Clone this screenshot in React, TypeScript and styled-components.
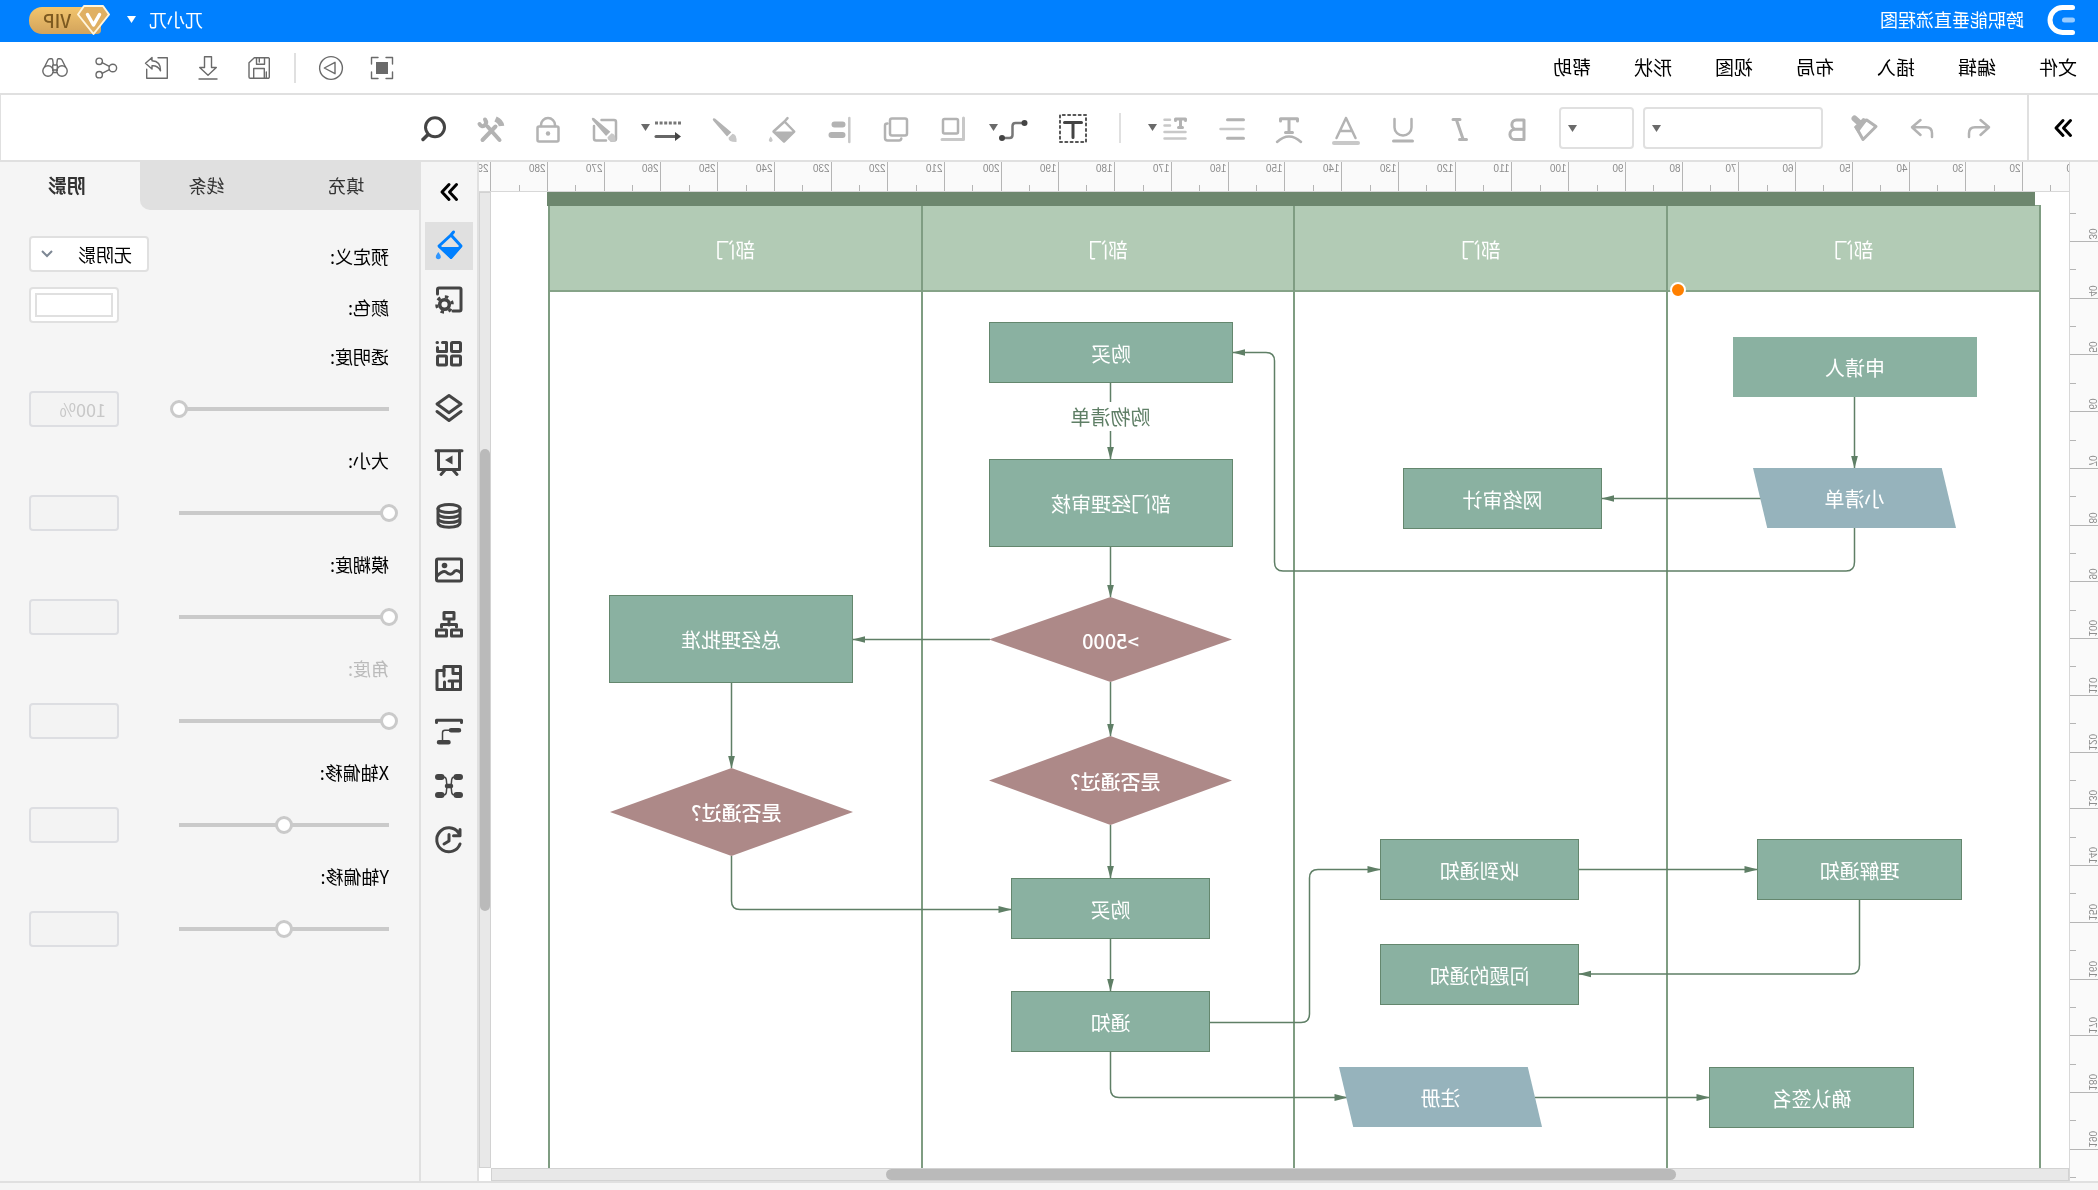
import React from "react";
import styled, { createGlobalStyle, css } from "styled-components";

const GlobalStyle = createGlobalStyle`
  *, *::before, *::after { box-sizing: border-box; }
  body { margin: 0; background: #fff; overflow: hidden; }
  body, button, input, select { font-family: "Noto Sans CJK SC", "Liberation Sans", sans-serif; }
  button { border: 0; padding: 0; background: none; color: inherit; cursor: pointer; }
  svg { display: block; overflow: visible; }
`;

const LINE = "#e0e0e0";
const EDGE = "#5f7f66";

/* The whole editor is rendered flipped, right to left. */
const Editor = styled.div`
  display: flex;
  flex-direction: column;
  height: 100vh;
  color: #000;
  transform: scaleX(-1);
`;

/* ---------- title bar ---------- */

const TitleBar = styled.header`
  display: flex;
  align-items: center;
  justify-content: space-between;
  height: 42px;
  flex: none;
  padding: 0 29px 2px 23px;
  background: #0080ff;
  color: #fff;
`;

const Brand = styled.div`
  display: flex;
  align-items: center;
  gap: 23px;
`;

const DocTitle = styled.h1`
  margin: 0;
  padding-bottom: 2px;
  font-size: 18px;
  font-weight: 400;
  line-height: 24px;
`;

const Account = styled.div`
  display: flex;
  align-items: center;
  gap: 17px;
`;

const UserButton = styled.button`
  display: flex;
  align-items: center;
  gap: 13px;
  padding-bottom: 2px;
  font-size: 18px;
  line-height: 24px;
`;

const VipBadge = styled.button`
  display: flex;
  align-items: center;
  height: 30px;
  color: #7d5a20;
`;

const VipPill = styled.span`
  width: 72px;
  height: 27px;
  margin-left: -24px;
  padding-left: 30px;
  border-radius: 4px 13px 13px 4px;
  background: linear-gradient(#f3c56c, #d2a35c);
  font-size: 18px;
  font-weight: 500;
  line-height: 26px;
  text-align: left;
`;

const Gem = styled.svg`
  position: relative;
  z-index: 1;
  flex: none;
`;

/* ---------- menu bar ---------- */

const MenuBar = styled.div`
  display: flex;
  align-items: center;
  justify-content: space-between;
  height: 53px;
  flex: none;
  padding: 0 43px 0 21px;
  border-bottom: 2px solid ${LINE};
`;

const Menus = styled.nav`
  display: flex;
  gap: 43px;
  padding-bottom: 2px;
`;

const MenuButton = styled.button`
  font-size: 19px;
  line-height: 28px;
`;

const QuickActions = styled.div`
  display: flex;
  align-items: center;
  gap: 27px;
`;

const QuickButton = styled.button`
  width: 24px;
  height: 24px;
  color: #6a6a6a;
`;

const Rule = styled.span<{ $margin?: string }>`
  width: 2px;
  height: 30px;
  margin: ${(p) => p.$margin ?? "0"};
  background: ${LINE};
`;

/* ---------- tool bar ---------- */

const ToolBar = styled.div`
  display: flex;
  height: 67px;
  flex: none;
  border-right: 1px solid ${LINE};
  border-bottom: 2px solid ${LINE};
`;

const ExpandButton = styled.button`
  display: grid;
  place-items: center;
  width: 71px;
  border-right: 2px solid ${LINE};
`;

const Tools = styled.div`
  display: flex;
  align-items: center;
  gap: 29px;
  padding-left: 34px;
`;

const Pickers = styled.div`
  display: flex;
  gap: 9px;
  margin: 0 -1px;
`;

const Picker = styled.div<{ $width: number }>`
  position: relative;
  width: ${(p) => p.$width}px;

  svg {
    position: absolute;
    top: 18px;
    right: 9px;
    pointer-events: none;
  }
`;

const PickerSelect = styled.select`
  width: 100%;
  height: 42px;
  border: 2px solid ${LINE};
  border-radius: 4px;
  background: #fff;
  appearance: none;
`;

const ToolButton = styled.button<{ $dark?: boolean; $menu?: boolean }>`
  display: flex;
  align-items: center;
  justify-content: space-between;
  width: ${(p) => (p.$menu ? 41 : 28)}px;
  height: 32px;
  color: ${(p) => (p.$dark ? "#444" : "#b3b3b3")};
  ${(p) =>
    p.$menu &&
    css`
      margin-right: -7px;
    `}
`;

/* ---------- work area ---------- */

const Main = styled.main`
  display: flex;
  flex: 1;
  min-height: 0;
`;

const Workspace = styled.section`
  display: grid;
  flex: 1;
  min-width: 0;
  grid-template-columns: 29px 1fr 12px;
  grid-template-rows: 30px 1fr 13px;
`;

const TopRuler = styled.div`
  grid-column: 2 / 4;
  grid-row: 1;
  overflow: hidden;
  border-bottom: 1px solid #d8d8d8;
  background: #fafafa;
`;

const SideRuler = styled.div`
  grid-column: 1;
  grid-row: 1 / 4;
  overflow: hidden;
  border-right: 1px solid #d8d8d8;
  background: #fafafa;
`;

const RulerText = styled.text`
  fill: #8c8c8c;
  font-family: "Liberation Sans", sans-serif;
  font-size: 10px;
`;

const Scroll = styled.div<{ $vertical?: boolean }>`
  grid-column: ${(p) => (p.$vertical ? 3 : 2)};
  grid-row: ${(p) => (p.$vertical ? 2 : 3)};
  border: 1px solid #d2d2d2;
  background: #e8e8e8;
`;

const Thumb = styled.div<{ $vertical?: boolean }>`
  border-radius: 6px;
  background: #bababa;
  ${(p) =>
    p.$vertical
      ? css`
          height: 462px;
          margin-top: 256px;
        `
      : css`
          width: 790px;
          height: 100%;
          margin-left: 392px;
        `}
`;

const Canvas = styled.div`
  position: relative;
  grid-column: 2;
  grid-row: 2;
  overflow: hidden;
  background: #fff;
`;

const PoolTitle = styled.div`
  position: absolute;
  left: 34px;
  top: 0;
  width: 1488px;
  height: 14px;
  background: #6d876e;
`;

const Pool = styled.div`
  position: absolute;
  left: 28px;
  top: 13px;
  bottom: 0;
  display: flex;
  width: 1493px;
  border-left: 2px solid #7f9d82;
`;

const Lane = styled.div`
  flex: 1;
  border-right: 2px solid #7f9d82;
`;

const LaneHead = styled.div`
  display: flex;
  align-items: center;
  justify-content: center;
  height: 87px;
  padding-top: 2px;
  border: solid #86a388;
  border-width: 1px 0 2px;
  background: #b2cbb5;
  color: #fff;
  font-size: 20px;
`;

const Edges = styled.svg`
  position: absolute;
  inset: 0;
  width: 100%;
  height: 100%;
  fill: none;
  stroke: ${EDGE};
  stroke-width: 1.5px;
`;

const EdgeLabel = styled.span`
  position: absolute;
  left: 900px;
  top: 211px;
  width: 117px;
  color: ${EDGE};
  font-size: 20px;
  line-height: 28px;
  text-align: center;
`;

type Kind = "box" | "plain" | "slant" | "diamond";

const kinds = {
  box: css`
    background: #8ab1a1;
    border: 1px solid #64876e;
  `,
  plain: css`
    background: #8ab1a1;
  `,
  slant: css`
    background: #96b3bc;
    clip-path: polygon(7% 0, 100% 0, 93% 100%, 0 100%);
  `,
  diamond: css`
    background: #ad8988;
    clip-path: polygon(50% 0, 100% 50%, 50% 100%, 0 50%);
    font-weight: 500;
  `,
};

const Node = styled.div<{ $kind: Kind; $x: number; $y: number; $w: number; $h: number }>`
  position: absolute;
  left: ${(p) => p.$x}px;
  top: ${(p) => p.$y}px;
  display: flex;
  align-items: center;
  justify-content: center;
  width: ${(p) => p.$w}px;
  height: ${(p) => p.$h}px;
  padding-top: 2px;
  color: #fff;
  font-size: 20px;
  line-height: 28px;
  ${(p) => kinds[p.$kind]}
`;

const Handle = styled.span`
  position: absolute;
  left: 383px;
  top: 90px;
  width: 16px;
  height: 16px;
  border: 2px solid #fff;
  border-radius: 50%;
  background: #ff8000;
`;

/* ---------- side strip and panel ---------- */

const Strip = styled.nav`
  display: flex;
  flex: none;
  flex-direction: column;
  align-items: center;
  gap: 6px;
  width: 60px;
  border: solid ${LINE};
  border-width: 0 2px;
  background: #f5f5f5;
`;

const CollapseButton = styled.button`
  display: grid;
  place-items: center;
  width: 48px;
  height: 54px;
  padding-top: 6px;
`;

const StripButton = styled.button<{ $active?: boolean }>`
  display: grid;
  place-items: center;
  width: 48px;
  height: 48px;
  background: ${(p) => (p.$active ? LINE : "none")};
  color: ${(p) => (p.$active ? "#0080ff" : "#444")};
`;

const Panel = styled.aside`
  flex: none;
  width: 419px;
  background: #f5f5f5;
`;

const Tabs = styled.div`
  display: flex;
  height: 48px;
`;

const Tab = styled.button<{ $active?: boolean; $last?: boolean }>`
  flex: 1;
  padding: 0 0 3px 6px;
  border-bottom-right-radius: ${(p) => (p.$last ? 10 : 0)}px;
  background: ${(p) => (p.$active ? "#f5f5f5" : LINE)};
  color: #333;
  font-size: ${(p) => (p.$active ? 19 : 18)}px;
  font-weight: ${(p) => (p.$active ? 700 : 400)};
`;

const Fields = styled.form`
  padding: 18px 29px 0 30px;
`;

const Row = styled.div`
  display: flex;
  align-items: center;
  justify-content: space-between;
  height: 51px;

  label {
    padding-top: 4px;
  }
`;

const Label = styled.label<{ $muted?: boolean }>`
  color: ${(p) => (p.$muted ? "#bbb" : "#000")};
  font-size: 18px;
  line-height: 26px;
`;

const Preset = styled.div`
  position: relative;
  width: 120px;

  svg {
    position: absolute;
    top: 14px;
    right: 12px;
    pointer-events: none;
  }
`;

const PresetSelect = styled.select`
  width: 100%;
  height: 36px;
  padding: 0 0 0 15px;
  border: 2px solid ${LINE};
  border-radius: 4px;
  background: #fff;
  color: #000;
  font-size: 18px;
  appearance: none;
`;

const ColorButton = styled.button`
  width: 90px;
  height: 36px;
  padding: 4px;
  border: 2px solid ${LINE};
  border-radius: 4px;
  background: #fff;
`;

const Swatch = styled.span`
  display: block;
  height: 24px;
  border: 2px solid ${LINE};
  background: #fff;
`;

const LabelRow = styled.div`
  display: flex;
  align-items: center;
  height: 54px;
  padding-bottom: 2px;
`;

const SliderRow = styled.div`
  display: flex;
  align-items: center;
  justify-content: space-between;
  height: 50px;
`;

const Slider = styled.input`
  width: 228px;
  height: 18px;
  margin: 0 0 0 -9px;
  appearance: none;
  background: linear-gradient(#cacaca, #cacaca) center / calc(100% - 18px) 4px no-repeat;

  &::-webkit-slider-thumb {
    appearance: none;
    width: 18px;
    height: 18px;
    border: 3px solid #cacaca;
    border-radius: 50%;
    background: #fff;
  }
`;

const ValueBox = styled.input`
  width: 90px;
  height: 36px;
  padding: 0 11px;
  border: 2px solid #dddee2;
  border-radius: 4px;
  background: #f3f3f3;
  color: #c8c8c8;
  font-size: 18px;
`;

const StatusBar = styled.footer`
  height: 9px;
  flex: none;
  border-top: 2px solid ${LINE};
  background: #f5f5f5;
`;

/* ---------- drawings ---------- */

type DrawProps = { w?: number; h?: number; sw?: number; children: React.ReactNode };

const Draw = ({ w = 28, h = 32, sw = 2.5, children }: DrawProps) => (
  <svg
    width={w}
    height={h}
    viewBox={`0 0 ${w} ${h}`}
    fill="none"
    stroke="currentColor"
    strokeWidth={sw}
    strokeLinecap="round"
    strokeLinejoin="round"
    aria-hidden="true"
  >
    {children}
  </svg>
);

const Caret = ({ color = "#6a6a6a" }: { color?: string }) => (
  <svg width="9" height="7" viewBox="0 0 9 7" fill={color} aria-hidden="true">
    <path d="M0 0h9L4.5 7z" />
  </svg>
);

const Chevrons = () => (
  <Draw w={18} h={18} sw={3}>
    <path d="M1.500 1.500 8.500 9l-7 7.500M9 1.500 16 9l-7 7.500" />
  </Draw>
);

const quickIcons: [string, React.ReactNode][] = [
  ["全屏", <><path d="M1.500 8V1.500H8M16 1.500h6.500V8M22.500 16v6.500H16M8 22.500H1.500V16" /><path d="M6 6h12v12H6z" fill="currentColor" stroke="none" /></>],
  ["播放", <><circle cx="12" cy="12" r="11.400" /><path d="M8 6.300v11.400L18.700 12z" /></>],
  ["保存", <><path d="M2.500 1.700h14.200l5.300 5V21a1.300 1.300 0 0 1-1.300 1.300H3A1.300 1.300 0 0 1 1.700 21V2.500zM6.500 1.700v6.500h8V1.700M11.700 2v4M6.700 22V12.500h10.600V22M4.700 16v6" /></>],
  ["下载", <path d="M8.500.7h7v10.800h4.800L12 19.300l-8.300-7.800h4.800zM3 23h18" />],
  ["导出", <><path d="M11 1.700H1.700v20.600h20.600v-9" /><path d="m17 1.500 6.500 5.800L17 13v-3.200c-4-.3-6.500 1.200-8.500 5C8.300 8.500 11 5 17 4.700z" /></>],
  ["分享", <><circle cx="18.800" cy="5.300" r="3.200" /><circle cx="18.800" cy="18.700" r="3.200" /><circle cx="5.200" cy="12" r="3.800" /><path d="m8.700 10.300 7.200-3.700M8.700 13.700l7.200 3.700" /></>],
  ["查找", <><circle cx="5" cy="15" r="5.200" /><circle cx="19" cy="15" r="5.200" /><path d="M1.500 11 5 4q.7-1.200 2-1.200h1.700q.8 0 1 1l.6 5.200h3.400l.6-5.200q.2-1 1-1H17q1.300 0 2 1.200l3.500 7M9.700 9v5.500M14.300 9v5.500M10 14h4M10 16.500h4" /></>],
];

const LIGHT = "#c8c8c8";

const bucket = (
  <>
    <path d="M8.500 6.200 11.500 9.500M11.500 9.500 1.800 19.500l10.200 10L22.500 19.500z" />
    <path d="M2 19.500h20.500L12 30z" fill="currentColor" stroke="none" />
    <path d="M25.300 24.500q2.500 3 1.700 4.500-1.700 2-3.400 0-.8-1.500 1.700-4.500z" fill={LIGHT} stroke="none" />
  </>
);

const brush = (
  <>
    <path d="M25.500 6.300q1.500 1 .2 2.400L12 24.500l-4.300-4.200L24 6.500z" fill="currentColor" stroke="none" />
    <path d="M6.500 21.700l4 4q.3 4.500-8 4.300-.5-7.800 4-8.300z" fill={LIGHT} stroke="none" />
  </>
);

type Tool = { name: string; icon: React.ReactNode; dark?: boolean; menu?: boolean; w?: number };

const historyTools: Tool[] = [
  { name: "撤销", icon: <path d="M12.500 8 4 15.300l8.500 7.700M4.500 15.300H18q6 0 6 6V25" /> },
  { name: "重做", icon: <path d="m15.500 8 8.500 7.300-8.500 7.700M23.500 15.300H10q-6 0-6 6V25" /> },
  {
    name: "格式刷",
    icon: <><path d="M12.300 8 3 14.500 16 27.500 23 15z" strokeWidth="3" /><path d="M11 7.500l5-1.500 9 9-4 6z" fill="currentColor" stroke="none" /><path d="M24.500 6.500l-5.500 5" strokeWidth="6" /></>,
  },
];

const textTools: Tool[] = [
  { name: "加粗", icon: <path d="M7 8v19.500h9a4.800 4.800 0 0 0 0-10.200H7.500M7 8h7.500a4.600 4.600 0 0 1 0 9.300" strokeWidth="3" /> },
  { name: "斜体", icon: <path d="M14 7.500h7M7.500 27.500h7M17.500 8l-6.500 19" strokeWidth="3" /> },
  { name: "下划线", icon: <><path d="M5.500 7v8.500a8.500 8 0 0 0 17 0V7" /><path d="M4.500 29h19" strokeWidth="3" /></> },
  { name: "字体颜色", icon: <><path d="m4.500 26 9.500-20 9.500 20M8 19h12" /><path d="M2 31h24" strokeWidth="4" stroke={LIGHT} /></> },
  { name: "文字效果", icon: <><path d="M5.500 9V6.800h17V9M14 7v13.500M10.500 20.500h7" strokeWidth="3" /><path d="M2 30q12-11 24 0" /></> },
  { name: "对齐", icon: <><path d="M2.500 7.700h16M2.500 26.300h16" strokeWidth="3" /><path d="M2.500 17h23" stroke={LIGHT} /></> },
  {
    name: "行距",
    menu: true,
    icon: <><path d="M3.500 8.500V7h10v1.500M8.500 7.500v8M6.500 15.500h4" strokeWidth="3" /><path d="M19 7.700h5.500M19 13.500h5.500M3.500 20h21M3.500 26.500h21" stroke={LIGHT} /></>,
  },
];

const shapeTools: Tool[] = [
  { name: "文本框", dark: true, icon: <><path d="M1 3h26v27H1z" strokeWidth="2" strokeDasharray="2 3.300" stroke="#555" /><path d="M5.500 10.500h17M14 11v14.500" strokeWidth="3" /></> },
  {
    name: "连接线",
    dark: true,
    menu: true,
    w: 32,
    icon: <><path d="M7 11h7.500q3 0 3 3v9q0 3 3 3H27" stroke="#777" /><circle cx="5.500" cy="11" r="3" fill="currentColor" stroke="none" /><circle cx="28" cy="26" r="3" fill="currentColor" stroke="none" /></>,
  },
  { name: "位置", icon: <><rect x="9" y="7" width="15" height="14.500" rx="1.500" /><path d="M3.500 6v21.500H25" stroke={LIGHT} strokeWidth="3" /></> },
  { name: "层级", icon: <><rect x="3" y="6.500" width="17" height="17" rx="2" /><path d="M22.500 11.500q2.500 0 2.500 2V26q0 2.500-2.500 2.500H11q-2 0-2.300-2" /></> },
  { name: "图形对齐", icon: <><path d="M3.700 6v24" stroke={LIGHT} /><path d="M10.500 12.500h8M10.500 23h11" strokeWidth="6" /></> },
  { name: "填充", icon: bucket },
  { name: "线条", icon: brush },
  {
    name: "线型",
    dark: true,
    menu: true,
    icon: <><path d="M1 11h26" strokeWidth="3" strokeLinecap="butt" strokeDasharray="3 1.600" stroke="#777" /><path d="M6 24.500h20" stroke="#666" strokeWidth="3" /><path d="M1 24.500l6-4.500v9z" fill="currentColor" stroke="none" /></>,
  },
  { name: "禁止编辑", icon: <><path d="M17.500 8H5q-2 0-2 2v16.500q0 2 2 2h3M13 28.500h10q2 0 2-2V14" /><g transform="translate(1 -.5)">{brush}</g></> },
  { name: "锁定", icon: <><rect x="3.500" y="14.500" width="21" height="15" rx="1.500" /><path d="M7 14v-1a7 7 0 0 1 14 0v1" /><circle cx="14" cy="21.500" r="2.200" fill="currentColor" stroke="none" /></> },
  {
    name: "工具",
    icon: <><path d="M9.500 14.500 22.500 28M17.500 14.500 5.500 28" strokeWidth="4" /><path d="M3.500 14q.5-4.500 6-7" strokeWidth="5.500" strokeLinecap="butt" /><path d="M20 7.500q-2.500 3.500.5 6 3 2 5-1.500" strokeWidth="4" /></>,
  },
  { name: "搜索", dark: true, icon: <><circle cx="13" cy="15.300" r="9.500" strokeWidth="3" /><path d="m20.500 23 4.500 4.500" strokeWidth="3.500" /></> },
];

const stripIcons: [string, React.ReactNode][] = [
  [
    "样式",
    <><path d="M9.500 0 12 3M12 3 2 14l10 11.500L24 14z" strokeWidth="3" /><path d="M1.500 15H25L12 27z" fill="currentColor" stroke="none" /><path d="M24.700 20q3.300 4 2.300 6-2.300 2.500-4.600 0-1-2 2.300-6z" fill="#2f96ff" stroke="none" /></>,
  ],
  [
    "页面设置",
    <><path d="M25.500 8V3.500q0-1.500-1.500-1.500H3.500Q2 2 2 3.500v20Q2 25 3.500 25H10" /><circle cx="18.500" cy="18.500" r="4.800" strokeWidth="3.500" /><circle cx="18.500" cy="18.500" r="7.800" strokeWidth="3" strokeLinecap="butt" strokeDasharray="3.500 4.670" /></>,
  ],
  ["图层网格", <><rect x="2.500" y="2.500" width="9" height="9" rx="1" /><rect x="2.500" y="16" width="9" height="9" rx="1" /><rect x="16.500" y="16" width="9" height="9" rx="1" /><path d="M20.500 2.500h-4v9h9v-4M25.500 2.500h.5" /></>],
  ["图层", <><path d="M14 1.500 26 10l-12 8.700L2 10z" /><path d="M2 17.500 14 26.500l12-9" /></>],
  ["演示", <><path d="M1 2.700h26" strokeWidth="3" /><path d="M3.500 3v18.500h21V3M10 22l-4 4.500M18 22l4 4.500" /><path d="M10.500 7.500 18 12l-7.500 4.500z" fill="currentColor" stroke="none" /></>],
  ["数据", <><ellipse cx="14" cy="6.500" rx="11" ry="4" /><path d="M3 6.500v14.500c0 5.500 22 5.500 22 0V6.500M3 11.500c0 5.300 22 5.300 22 0M3 16.500c0 5.300 22 5.300 22 0" /></>],
  ["图片", <><rect x="1.500" y="3" width="25" height="22" rx="1.500" /><circle cx="18.500" cy="9.500" r="2.800" fill="currentColor" stroke="none" /><path d="M2 17q5-5 8 0 3 3 7-1 3-2 9 4" /></>],
  ["组织结构", <><path d="M9 2.500h10V9H9zM14 9v6M6.500 17v-2.500h15V17" /><path d="M1.500 20h10v6h-10zM16.500 20h10v6h-10z" /></>],
  ["平面图", <><path d="M2.500 2.500H19v4h7V25.500H2.500z" strokeWidth="3" /><path d="M10 3v6.500H2.500M19 6v6M3 17h11M10.500 17v8M18.500 18v7" /></>],
  ["泳道", <><path d="M1.500 4.500V2.200h25v2.300" strokeWidth="3" /><path d="M13 12.300h5q2.500 0 2.500 2.500v8" strokeWidth="1.500" /><path d="M4 12.300h8M14.500 24.300H24" strokeWidth="4.500" /></>],
  ["思维导图", <><path d="M6 5h2.500q3 0 3 4.500t2.500 4.500q2.500 0 2.500-4.500t3-4.500H22M6 23h2.500q3 0 3-4.500T14 14q2.500 0 2.500 4.500t3 4.500H22" strokeWidth="1.500" /><path d="M3 5h3.500M21.500 5h3.500M3 23h3.500M21.500 23h3.500" strokeWidth="6" /><path d="M12 14h4" strokeWidth="4.500" /></>],
  ["历史", <><path d="M4.500 6.800A12 12 0 1 1 3 18M3 3.500v6.300h6.500" /><path d="M14 8.500v6.500l5 3" strokeWidth="3" /></>],
];

/* ---------- diagram ---------- */

const nodes: [string, Kind, number, number, number, number][] = [
  ["申请人", "plain", 92, 145, 244, 60],
  ["小清单", "slant", 113, 276, 203, 60],
  ["网络审计", "box", 467, 276, 199, 61],
  ["购买", "box", 836, 130, 244, 61],
  ["部门经理审核", "box", 836, 267, 244, 88],
  [">5000", "diamond", 837, 405, 243, 85],
  ["总经理批准", "box", 1216, 403, 244, 88],
  ["是否通过？", "diamond", 837, 544, 243, 89],
  ["是否通过？", "diamond", 1216, 576, 243, 88],
  ["购买", "box", 859, 686, 199, 61],
  ["通知", "box", 859, 799, 199, 61],
  ["收到通知", "box", 490, 647, 199, 61],
  ["理解通知", "box", 107, 647, 205, 61],
  ["问题的通知", "box", 490, 752, 199, 61],
  ["注册", "slant", 527, 875, 203, 60],
  ["确认签名", "box", 155, 875, 205, 61],
];

const edges = [
  "M214.500 205V276",
  "M308 306.500H467",
  "M214.500 336V370Q214.500 379 223 379H786Q794.500 379 794.500 370V169Q794.500 160.500 803 160.500H836",
  "M958.500 239V267",
  "M958.500 355V405",
  "M958.500 490V544",
  "M958.500 633V686",
  "M958.500 747V799",
  "M1079 447.500H1216",
  "M1337.500 491V576",
  "M1337.500 664V709Q1337.500 717.500 1329 717.500H1058",
  "M859 830.500H768Q759.500 830.500 759.500 822V686Q759.500 677.500 751 677.500H689",
  "M490 677.500H312",
  "M209.500 708V773Q209.500 782 218 782H490",
  "M958.500 860V897Q958.500 905.500 950 905.500H722",
  "M534 905.500H360",
];

/* Ten ruler units, in canvas pixels. */
const PITCH = 1475 / 26;
const marks = Array.from({ length: 29 }, (_, i) => (i + 1) * 10);

const HorizontalRuler = () => (
  <svg width="100%" height="29" stroke="#b5b5b5" aria-hidden="true">
    {marks.map((n) => {
      const x = Math.round(46 + (n / 10 - 2) * PITCH) + 0.5;
      const mid = Math.round(46 + (n / 10 - 1.5) * PITCH) + 0.5;
      return (
        <g key={n}>
          <path d={`M${x} 0V29M${mid} 23V29`} />
          <RulerText x={x + 2} y="10" stroke="none">{n}</RulerText>
        </g>
      );
    })}
  </svg>
);

const VerticalRuler = () => (
  <svg width="28" height="100%" stroke="#b5b5b5" aria-hidden="true">
    {marks.slice(2, 20).map((n) => {
      const y = Math.round(79 + (n / 10 - 3) * PITCH) + 0.5;
      const mid = Math.round(79 + (n / 10 - 3.5) * PITCH) + 0.5;
      return (
        <g key={n}>
          <path d={`M0 ${y}H28M22 ${mid}H28`} />
          {n < 200 && (
            <RulerText transform={`translate(9 ${y - 2}) rotate(-90)`} stroke="none">{n}</RulerText>
          )}
        </g>
      );
    })}
  </svg>
);

const sliders = [
  { id: "opacity", label: "透明度:", at: 100, value: "100%" },
  { id: "size", label: "大小:", at: 0, value: "" },
  { id: "blur", label: "模糊度:", at: 0, value: "" },
  { id: "angle", label: "角度:", at: 0, value: "", muted: true },
  { id: "offset-x", label: "X轴偏移:", at: 50, value: "" },
  { id: "offset-y", label: "Y轴偏移:", at: 50, value: "" },
];

const ToolList = ({ items }: { items: Tool[] }) => (
  <>
    {items.map((t) => (
      <ToolButton key={t.name} type="button" aria-label={t.name} $dark={t.dark} $menu={t.menu}>
        <Draw w={t.w}>{t.icon}</Draw>
        {t.menu && <Caret />}
      </ToolButton>
    ))}
  </>
);

export default function App() {
  return (
    <>
      <GlobalStyle />
      <Editor>
        <TitleBar>
          <Brand>
            <Draw w={28} h={30} sw={5}>
              <path d="M2.500 2.500h10a12.500 12.500 0 0 1 0 25h-10" />
              <path d="M2.500 15h8" stroke="#99ccff" />
            </Draw>
            <DocTitle>跨职能垂直流程图</DocTitle>
          </Brand>
          <Account>
            <UserButton type="button">
              兀小兀
              <Caret color="#fff" />
            </UserButton>
            <VipBadge type="button">
              <Gem width="33" height="30" viewBox="0 0 33 30" strokeLinejoin="round" aria-hidden="true">
                <path d="M7 1h19l6 8.500L16.500 29 1 9.500z" fill="#e0b062" stroke="#fff5dc" strokeWidth="2" />
                <path d="M10.500 9.500 16.500 20l6-10.500" fill="none" stroke="#fff" strokeWidth="3.500" strokeLinecap="round" />
              </Gem>
              <VipPill>VIP</VipPill>
            </VipBadge>
          </Account>
        </TitleBar>

        <MenuBar>
          <Menus>
            {["文件", "编辑", "插入", "布局", "视图", "形状", "帮助"].map((m) => (
              <MenuButton key={m} type="button">{m}</MenuButton>
            ))}
          </Menus>
          <QuickActions>
            {quickIcons.map(([name, icon], i) => (
              <React.Fragment key={name}>
                {i === 2 && <Rule $margin="0 -4px" />}
                <QuickButton type="button" aria-label={name}>
                  <Draw w={24} h={24} sw={1.4}>{icon}</Draw>
                </QuickButton>
              </React.Fragment>
            ))}
          </QuickActions>
        </MenuBar>

        <ToolBar>
          <ExpandButton type="button" aria-label="展开"><Chevrons /></ExpandButton>
          <Tools>
            <ToolList items={historyTools} />
            <Pickers>
              <Picker $width={180}>
                <PickerSelect aria-label="字体"><option /></PickerSelect>
                <Caret />
              </Picker>
              <Picker $width={75}>
                <PickerSelect aria-label="字号"><option /></PickerSelect>
                <Caret />
              </Picker>
            </Pickers>
            <ToolList items={textTools} />
            <Rule $margin="0 3px 0 5px" />
            <ToolList items={shapeTools} />
          </Tools>
        </ToolBar>

        <Main>
          <Workspace>
            <SideRuler><VerticalRuler /></SideRuler>
            <TopRuler><HorizontalRuler /></TopRuler>
            <Canvas>
              <Pool>
                {[1, 2, 3, 4].map((n) => (
                  <Lane key={n}><LaneHead>部门</LaneHead></Lane>
                ))}
              </Pool>
              <PoolTitle />
              <Edges aria-hidden="true">
                <defs>
                  <marker id="arrow" markerUnits="userSpaceOnUse" markerWidth="13" markerHeight="8" refX="12.500" refY="4" orient="auto">
                    <path d="M0 .5 13 4 0 7.500z" fill={EDGE} stroke="none" />
                  </marker>
                </defs>
                <path d="M958.500 191V210" />
                {edges.map((d) => <path key={d} d={d} markerEnd="url(#arrow)" />)}
              </Edges>
              <EdgeLabel>购物清单</EdgeLabel>
              {nodes.map(([text, kind, x, y, w, h]) => (
                <Node key={`${x}-${y}`} $kind={kind} $x={x} $y={y} $w={w} $h={h}>{text}</Node>
              ))}
              <Handle />
            </Canvas>
            <Scroll $vertical><Thumb $vertical /></Scroll>
            <Scroll><Thumb /></Scroll>
          </Workspace>

          <Strip>
            <CollapseButton type="button" aria-label="收起"><Chevrons /></CollapseButton>
            {stripIcons.map(([name, icon], i) => (
              <StripButton key={name} type="button" aria-label={name} $active={i === 0}>
                <Draw h={28} sw={3}>{icon}</Draw>
              </StripButton>
            ))}
          </Strip>

          <Panel>
            <Tabs role="tablist">
              <Tab type="button" role="tab">填充</Tab>
              <Tab type="button" role="tab" $last>线条</Tab>
              <Tab type="button" role="tab" aria-selected="true" $active>阴影</Tab>
            </Tabs>
            <Fields>
              <Row>
                <Label htmlFor="preset">预定义:</Label>
                <Preset>
                  <PresetSelect id="preset"><option>无阴影</option></PresetSelect>
                  <svg width="12" height="8" viewBox="0 0 12 8" fill="none" stroke="#7d8794" strokeWidth="2" aria-hidden="true">
                    <path d="m1 1 5 5 5-5" />
                  </svg>
                </Preset>
              </Row>
              <Row>
                <Label htmlFor="color">颜色:</Label>
                <ColorButton id="color" type="button"><Swatch /></ColorButton>
              </Row>
              {sliders.map((s) => (
                <React.Fragment key={s.id}>
                  <LabelRow><Label htmlFor={s.id} $muted={s.muted}>{s.label}</Label></LabelRow>
                  <SliderRow>
                    <Slider id={s.id} type="range" min="0" max="100" defaultValue={s.at} />
                    <ValueBox aria-label={s.label} defaultValue={s.value} disabled />
                  </SliderRow>
                </React.Fragment>
              ))}
            </Fields>
          </Panel>
        </Main>
        <StatusBar />
      </Editor>
    </>
  );
}
